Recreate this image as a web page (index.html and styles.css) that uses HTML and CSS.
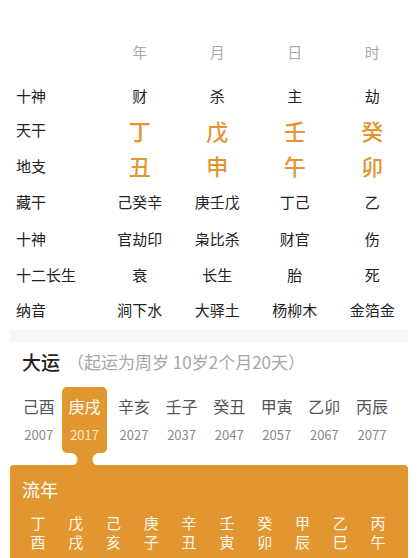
FILE: index.html
```html
<!DOCTYPE html>
<html lang="zh-CN">
<head>
<meta charset="utf-8">
<title>八字</title>
<link rel="stylesheet" href="styles.css">
</head>
<body>
<div class="page">
  <div class="chart-head">
    <div></div>
    <div class="col-h">年</div>
    <div class="col-h">月</div>
    <div class="col-h">日</div>
    <div class="col-h">时</div>
  </div>
  <div class="chart">
    <div class="lbl">十神</div><div class="val">财</div><div class="val">杀</div><div class="val">主</div><div class="val">劫</div>
    <div class="lbl">天干</div><div class="big">丁</div><div class="big">戊</div><div class="big">壬</div><div class="big">癸</div>
    <div class="lbl">地支</div><div class="big">丑</div><div class="big">申</div><div class="big">午</div><div class="big">卯</div>
    <div class="lbl">藏干</div><div class="val">己癸辛</div><div class="val">庚壬戊</div><div class="val">丁己</div><div class="val">乙</div>
    <div class="lbl">十神</div><div class="val">官劫印</div><div class="val">枭比杀</div><div class="val">财官</div><div class="val">伤</div>
    <div class="lbl">十二长生</div><div class="val">衰</div><div class="val">长生</div><div class="val">胎</div><div class="val">死</div>
    <div class="lbl">纳音</div><div class="val">涧下水</div><div class="val">大驿土</div><div class="val">杨柳木</div><div class="val">金箔金</div>
  </div>
  <div class="sep"></div>
  <div class="dy-title"><span class="dy-name">大运</span><span class="dy-sub">（起运为周岁 10岁2个月20天）</span></div>
  <div class="dy-row">
    <div class="dy"><div class="dy-gz">己酉</div><div class="dy-yr">2007</div></div>
    <div class="dy active"><div class="dy-gz">庚戌</div><div class="dy-yr">2017</div>
      <svg class="neck" width="28" height="14" viewBox="0 0 28 14"><path d="M0 0 H28 V1 A6.5 6.5 0 0 0 28 14 H0 A6.5 6.5 0 0 0 0 1 Z" fill="#e2962f"/></svg>
    </div>
    <div class="dy"><div class="dy-gz">辛亥</div><div class="dy-yr">2027</div></div>
    <div class="dy"><div class="dy-gz">壬子</div><div class="dy-yr">2037</div></div>
    <div class="dy"><div class="dy-gz">癸丑</div><div class="dy-yr">2047</div></div>
    <div class="dy"><div class="dy-gz">甲寅</div><div class="dy-yr">2057</div></div>
    <div class="dy"><div class="dy-gz">乙卯</div><div class="dy-yr">2067</div></div>
    <div class="dy"><div class="dy-gz">丙辰</div><div class="dy-yr">2077</div></div>
  </div>
  <div class="ln-panel">
    <div class="ln-title">流年</div>
    <div class="ln-row">
      <div class="ln"><span>丁</span><span>酉</span></div>
      <div class="ln"><span>戊</span><span>戌</span></div>
      <div class="ln"><span>己</span><span>亥</span></div>
      <div class="ln"><span>庚</span><span>子</span></div>
      <div class="ln"><span>辛</span><span>丑</span></div>
      <div class="ln"><span>壬</span><span>寅</span></div>
      <div class="ln"><span>癸</span><span>卯</span></div>
      <div class="ln"><span>甲</span><span>辰</span></div>
      <div class="ln"><span>乙</span><span>巳</span></div>
      <div class="ln"><span>丙</span><span>午</span></div>
    </div>
  </div>
</div>
</body>
</html>
```
FILE: styles.css
```css
html, body {
  margin: 0;
  padding: 0;
  background: #fff;
}
body {
  font-family: "Noto Sans CJK SC", "Noto Sans", sans-serif;
  color: #333;
  width: 418px;
  height: 558px;
  overflow: hidden;
}
.page {
  padding-top: 34px;
}
.chart-head,
.chart {
  display: grid;
  grid-template-columns: 85px repeat(4, 77.5px);
  padding-left: 16px;
}
.chart-head {
  height: 36px;
  margin-bottom: 9px;
}
.col-h {
  text-align: center;
  font-size: 15px;
  line-height: 36px;
  color: #ababab;
}
.chart {
  grid-template-rows: 33px 35px 36px 37px 36px 36px 35px;
}
.chart > div {
  display: flex;
  align-items: center;
}
.lbl {
  font-size: 15px;
  color: #222;
}
.val {
  justify-content: center;
  font-size: 15px;
  color: #222;
}
.big {
  justify-content: center;
  font-size: 22px;
  font-weight: 500;
  color: #e2962f;
}
.sep {
  height: 12px;
  margin: 3px 10px 0;
  background: #f7f7f7;
}
.dy-title {
  display: flex;
  align-items: center;
  height: 28px;
  margin-top: 5px;
  padding-left: 22px;
}
.dy-name {
  font-size: 19px;
  font-weight: 500;
  color: #222;
}
.dy-sub {
  font-size: 17px;
  color: #a6a6a6;
  margin-left: 7px;
}
.dy-row {
  display: grid;
  grid-template-columns: repeat(8, 47.6px);
  padding-left: 15px;
  margin-top: 12px;
}
.dy {
  position: relative;
  height: 66px;
  padding-top: 7px;
  box-sizing: border-box;
  text-align: center;
}
.dy-gz {
  font-size: 16px;
  line-height: 24px;
  color: #555;
}
.dy-yr {
  font-size: 13px;
  line-height: 24px;
  margin-top: 5px;
  color: #8a8a8a;
}
.dy.active {
  background: #e2962f;
  border-radius: 5px;
  width: 45px;
  margin-left: -0.5px;
}
.dy.active .dy-gz {
  color: #fff;
}
.dy.active .dy-yr {
  color: #fbe9cf;
}
.neck {
  position: absolute;
  left: 8.5px;
  top: 65px;
  display: block;
}
.ln-panel {
  margin: 12px 10px 0;
  background: #e2962f;
  border-radius: 4px 4px 0 0;
  padding: 12px 0 20px;
  color: #fff;
}
.ln-title {
  font-size: 18px;
  line-height: 24px;
  padding-left: 12px;
}
.ln-row {
  display: grid;
  grid-template-columns: repeat(10, 37.8px);
  padding-left: 9px;
  margin-top: 12px;
}
.ln {
  display: flex;
  flex-direction: column;
  align-items: center;
  font-size: 15px;
  line-height: 19px;
  color: #fff8ee;
}
.ln span {
  display: block;
  height: 19px;
}
```
